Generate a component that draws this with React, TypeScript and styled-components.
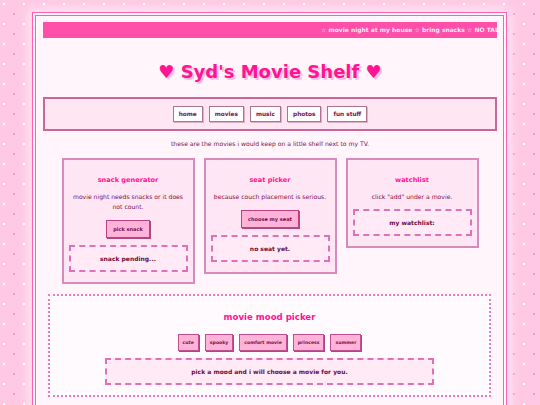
import styled, { createGlobalStyle } from 'styled-components'

const GlobalStyle = createGlobalStyle`
  html, body {
    margin: 0;
    padding: 0;
  }
  body {
    background-color: #ffc9e5;
    background-image:
      radial-gradient(circle, #ffffff 0.8px, transparent 1.2px),
      radial-gradient(circle, #f59ac8 0.8px, transparent 1.2px);
    background-size: 20px 20px, 20px 20px;
    background-position: -6px -6px, 4px 4px;
    font-family: "Comic Sans MS", "DejaVu Sans", sans-serif;
    color: #7a1048;
  }
`

const Page = styled.div`
  padding: 12px 33px 0 32px;
`

const Frame = styled.div`
  background: #fff5fb;
  border: 4px double #ff5fb0;
  box-shadow: 0 0 10px 3px rgba(255, 240, 248, 0.8);
  padding: 6px 6px 20px 7px;
`

// scrolling banner, frozen mid-scroll
const Marquee = styled.div`
  height: 16px;
  background: #ff4fa8;
  color: #ffe6f3;
  font-size: 6px;
  font-weight: bold;
  line-height: 16px;
  white-space: nowrap;
  overflow: hidden;
  padding-left: 278px;
`

const Title = styled.h1`
  margin: 20px 0 0;
  text-align: center;
  font-size: 18px;
  line-height: 28px;
  color: #ff1493;
  text-shadow: 2px 2px 0 #ffbfe0;
`

const Nav = styled.nav`
  margin-top: 11px;
  background: #ffe6f3;
  border: 2px solid #cc6699;
  padding: 7px 0;
  display: flex;
  justify-content: center;
  gap: 6px;
`

const NavButton = styled.span`
  height: 16px;
  line-height: 15px;
  box-sizing: border-box;
  padding: 0 5px;
  background: #fff;
  border: 1px solid #b0708f;
  box-shadow: 1px 1px 0 #dfb0c8;
  font-size: 5.8px;
  font-weight: bold;
  color: #7a1048;
`

const Intro = styled.p`
  margin: 8px 0 0;
  text-align: center;
  font-size: 6.1px;
  line-height: 10px;
  color: #7a1048;
`

const CardRow = styled.div`
  margin-top: 9px;
  display: grid;
  grid-template-columns: repeat(3, 133px);
  justify-content: center;
  align-items: start;
  gap: 9px;
`

const Card = styled.section`
  box-sizing: border-box;
  width: 133px;
  background: #ffe6f5;
  border: 2px solid #d58cbb;
  padding: 14px 5px 10px;
  text-align: center;
`

const CardTitle = styled.h3`
  margin: 0;
  font-size: 6.6px;
  line-height: 12px;
  color: #ff1493;
`

const CardText = styled.p`
  margin: 6px 0 0;
  padding: 0 1px;
  font-size: 6.1px;
  line-height: 10px;
  color: #7a1048;
`

const PinkButton = styled.button`
  display: inline-block;
  margin-top: 8px;
  height: 18px;
  padding: 0 6px;
  background: #ffb3d9;
  border: 1px solid #c0407f;
  box-shadow: 1px 1px 0 #b04880;
  font-family: inherit;
  font-size: 5px;
  font-weight: bold;
  color: #7a0a48;
`

const ResultBox = styled.div<{ $width?: string }>`
  box-sizing: border-box;
  margin: 7px auto 0;
  width: ${p => p.$width ?? 'auto'};
  height: 27px;
  border: 2px dashed #e070b8;
  background: #ffeaf6;
  display: flex;
  align-items: center;
  justify-content: center;
  font-size: 6px;
  font-weight: bold;
  color: #6a0a40;
`

const MoodSection = styled.section`
  margin: 10px 6px 0 5px;
  background: #fffafd;
  border: 2px dotted #e87cc0;
  padding: 14px 0 10px;
  text-align: center;
`

const MoodTitle = styled.h2`
  margin: 0;
  font-size: 8.6px;
  line-height: 14px;
  color: #ff1493;
`

const MoodButtons = styled.div`
  margin-top: 10px;
  display: flex;
  justify-content: center;
  gap: 6px;
`

const MoodButton = styled(PinkButton)`
  margin-top: 0;
  height: 17px;
  padding: 0 4px;
  font-size: 4.6px;
  border-color: #c05090;
`

const cards = [
  {
    title: 'snack generator',
    text: 'movie night needs snacks or it does not count.',
    button: 'pick snack',
    result: 'snack pending...',
  },
  {
    title: 'seat picker',
    text: 'because couch placement is serious.',
    button: 'choose my seat',
    result: 'no seat yet.',
  },
  {
    title: 'watchlist',
    text: 'click "add" under a movie.',
    result: 'my watchlist:',
  },
]

const moods = ['cute', 'spooky', 'comfort movie', 'princess', 'summer']

export default function App() {
  return (
    <>
      <GlobalStyle />
      <Page>
        <Frame>
          <Marquee>☆ movie night at my house ☆ bring snacks ☆ NO TALKING DURING THE MOVIE ☆</Marquee>
          <Title>♥ Syd's Movie Shelf ♥</Title>
          <Nav>
            {['home', 'movies', 'music', 'photos', 'fun stuff'].map(item => (
              <NavButton key={item}>{item}</NavButton>
            ))}
          </Nav>
          <Intro>these are the movies i would keep on a little shelf next to my TV.</Intro>
          <CardRow>
            {cards.map(card => (
              <Card key={card.title}>
                <CardTitle>{card.title}</CardTitle>
                <CardText>{card.text}</CardText>
                {card.button && <PinkButton>{card.button}</PinkButton>}
                <ResultBox>{card.result}</ResultBox>
              </Card>
            ))}
          </CardRow>
          <MoodSection>
            <MoodTitle>movie mood picker</MoodTitle>
            <MoodButtons>
              {moods.map(mood => (
                <MoodButton key={mood}>{mood}</MoodButton>
              ))}
            </MoodButtons>
            <ResultBox $width="75%">pick a mood and i will choose a movie for you.</ResultBox>
          </MoodSection>
        </Frame>
      </Page>
    </>
  )
}
